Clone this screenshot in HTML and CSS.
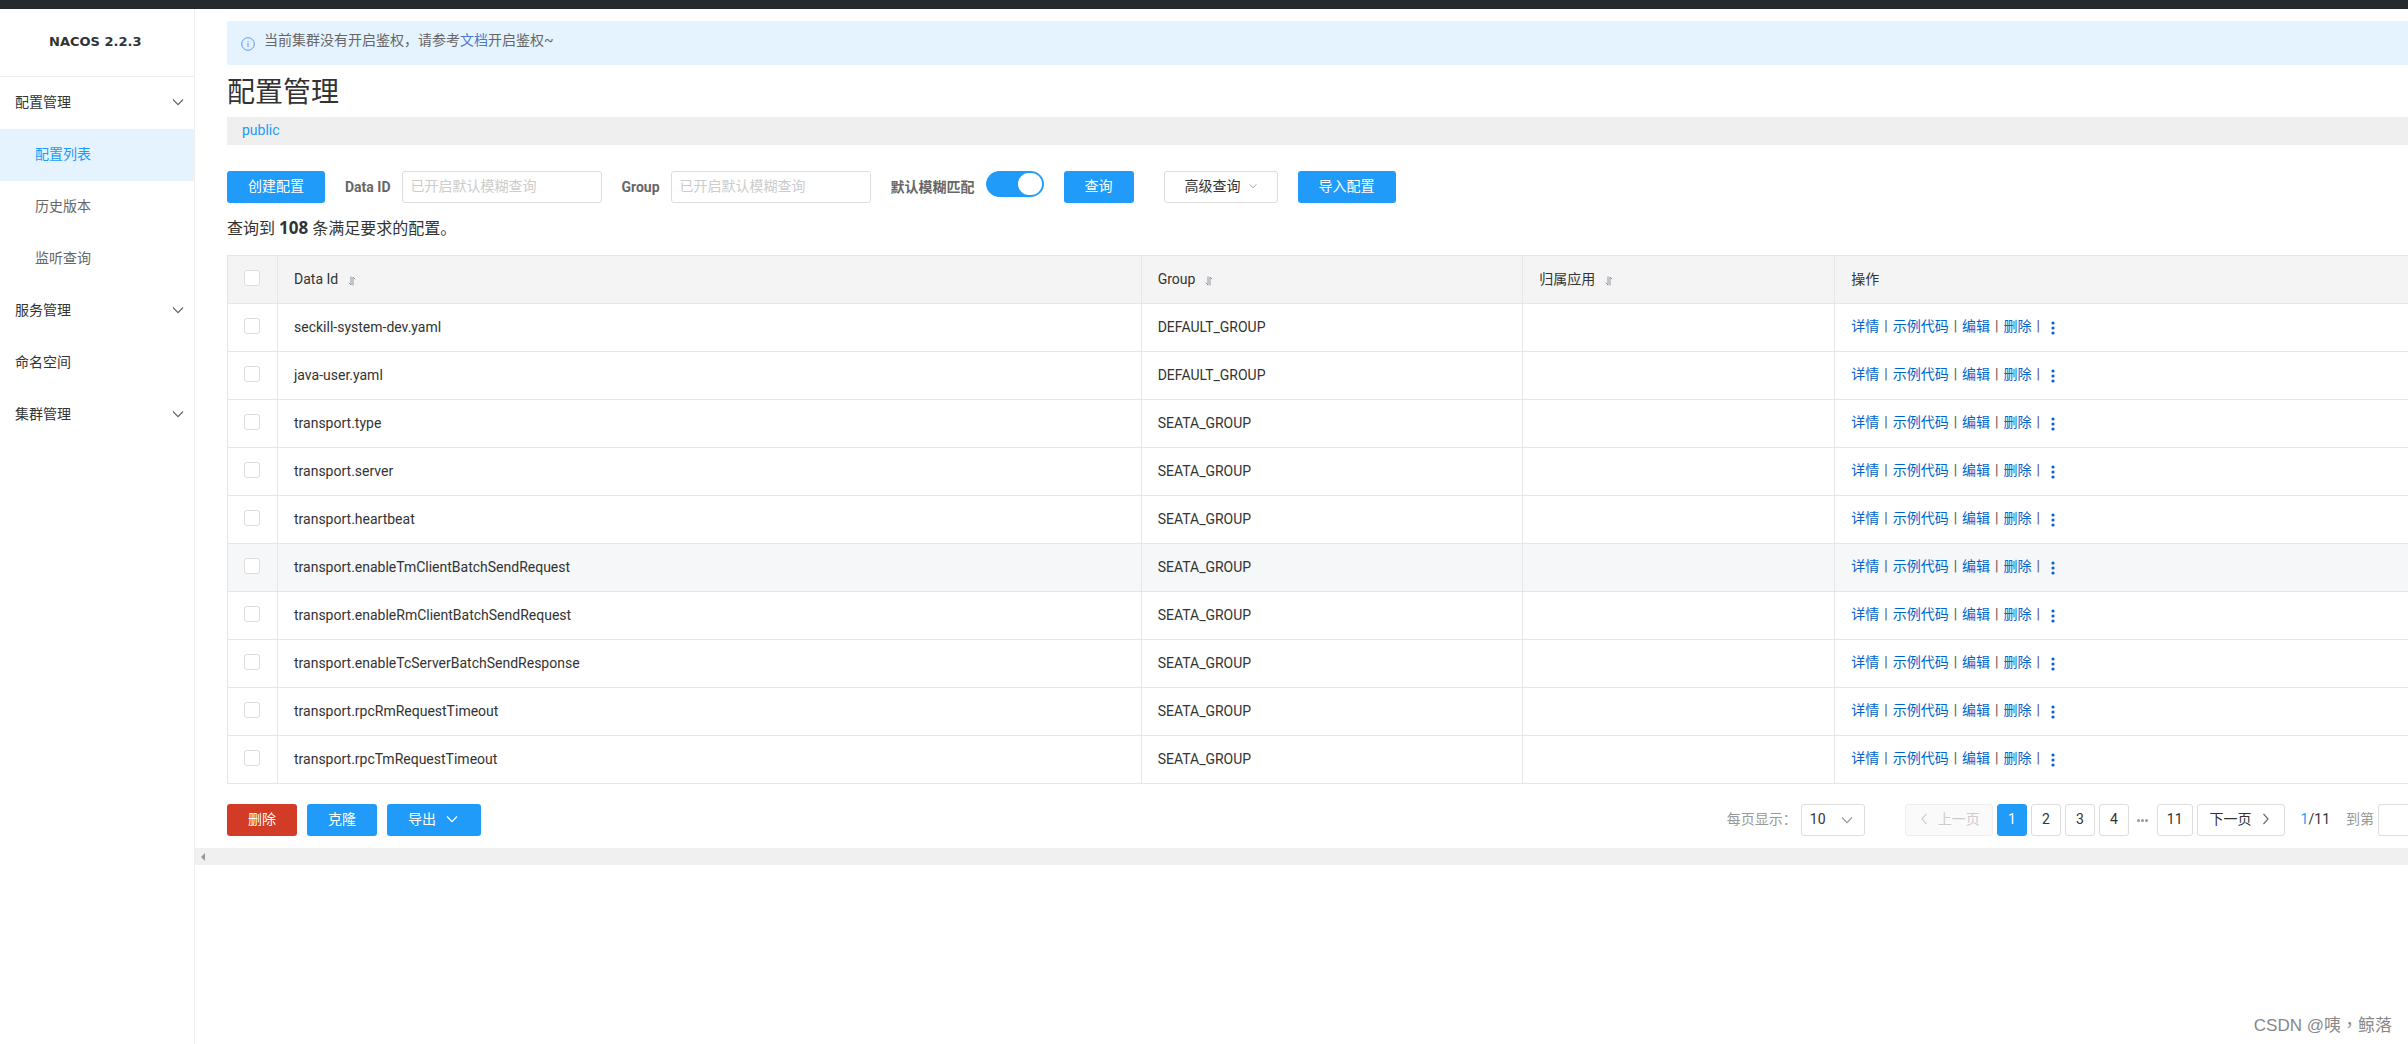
FILE: index.html
```html
<!DOCTYPE html>
<html lang="zh-CN">
<head>
<meta charset="utf-8">
<title>Nacos</title>
<link rel="stylesheet" href="styles.css">
</head>
<body>
<svg class="defs" aria-hidden="true">
  <symbol id="down" viewBox="0 0 12 12"><path d="M1 3.5 6 8.7 11 3.5" fill="none" stroke="currentColor" stroke-width="1.2"/></symbol>
  <symbol id="left" viewBox="0 0 12 12"><path d="M8.5 .8 4 6l4.500 5.200" fill="none" stroke="currentColor" stroke-width="1.2"/></symbol>
  <symbol id="right" viewBox="0 0 12 12"><path d="M3.500 .8 8 6l-4.500 5.200" fill="none" stroke="currentColor" stroke-width="1.2"/></symbol>
  <symbol id="sort" viewBox="0 0 10 10"><path d="M4 .5V9L1.800 6.800M6 9.500V1L8.200 3.200" fill="none" stroke="currentColor" stroke-width=".9"/></symbol>
  <symbol id="more" viewBox="0 0 4 14"><circle cx="2" cy="2" r="1.600"/><circle cx="2" cy="7" r="1.600"/><circle cx="2" cy="12" r="1.600"/></symbol>
</svg>
<header class="topbar"></header>
<div class="layout">
  <aside class="sidebar">
    <h1 class="brand">NACOS 2.2.3</h1>
    <nav class="menu">
      <a class="item" href="#">配置管理<svg class="icon"><use href="#down"/></svg></a>
      <a class="item sub active" href="#">配置列表</a>
      <a class="item sub" href="#">历史版本</a>
      <a class="item sub" href="#">监听查询</a>
      <a class="item" href="#">服务管理<svg class="icon"><use href="#down"/></svg></a>
      <a class="item" href="#">命名空间</a>
      <a class="item" href="#">集群管理<svg class="icon"><use href="#down"/></svg></a>
    </nav>
  </aside>
  <main class="main">
    <div class="content">
      <div class="notice">
        <svg class="info" viewBox="0 0 14 14"><circle cx="7" cy="7" r="6.300" fill="none" stroke="currentColor"/><path d="M7 6v4M7 4v1" stroke="currentColor"/></svg>
        <p>当前集群没有开启鉴权，请参考<a href="#">文档</a>开启鉴权~</p>
      </div>
      <h2 class="title">配置管理</h2>
      <div class="namespace"><a href="#">public</a></div>
      <form class="filters">
        <button class="btn primary" type="button">创建配置</button>
        <div class="field"><label for="dataId">Data ID</label><input id="dataId" class="text" type="text" placeholder="已开启默认模糊查询"></div>
        <div class="field"><label for="group">Group</label><input id="group" class="text" type="text" placeholder="已开启默认模糊查询"></div>
        <div class="field"><label for="fuzzy">默认模糊匹配</label><input id="fuzzy" class="switch" type="checkbox" role="switch" checked></div>
        <button class="btn primary" type="button">查询</button>
        <button class="btn advanced" type="button">高级查询<svg class="icon small"><use href="#down"/></svg></button>
        <button class="btn primary" type="button">导入配置</button>
      </form>
      <p class="summary">查询到 <strong>108</strong> 条满足要求的配置。</p>
      <table class="grid">
        <colgroup><col class="c-check"><col class="c-id"><col class="c-group"><col class="c-app"><col></colgroup>
        <thead>
          <tr><th class="check"><input type="checkbox" aria-label="全选"></th><th>Data Id<svg class="sort"><use href="#sort"/></svg></th><th>Group<svg class="sort"><use href="#sort"/></svg></th><th>归属应用<svg class="sort"><use href="#sort"/></svg></th><th>操作</th></tr>
        </thead>
        <tbody>
          <tr><td class="check"><input type="checkbox" aria-label="选择"></td><td>seckill-system-dev.yaml</td><td>DEFAULT_GROUP</td><td></td><td class="ops"><a href="#">详情</a><i>|</i><a href="#">示例代码</a><i>|</i><a href="#">编辑</a><i>|</i><a href="#">删除</a><i>|</i><a href="#" aria-label="更多"><svg class="more"><use href="#more"/></svg></a></td></tr>
          <tr><td class="check"><input type="checkbox" aria-label="选择"></td><td>java-user.yaml</td><td>DEFAULT_GROUP</td><td></td><td class="ops"><a href="#">详情</a><i>|</i><a href="#">示例代码</a><i>|</i><a href="#">编辑</a><i>|</i><a href="#">删除</a><i>|</i><a href="#" aria-label="更多"><svg class="more"><use href="#more"/></svg></a></td></tr>
          <tr><td class="check"><input type="checkbox" aria-label="选择"></td><td>transport.type</td><td>SEATA_GROUP</td><td></td><td class="ops"><a href="#">详情</a><i>|</i><a href="#">示例代码</a><i>|</i><a href="#">编辑</a><i>|</i><a href="#">删除</a><i>|</i><a href="#" aria-label="更多"><svg class="more"><use href="#more"/></svg></a></td></tr>
          <tr><td class="check"><input type="checkbox" aria-label="选择"></td><td>transport.server</td><td>SEATA_GROUP</td><td></td><td class="ops"><a href="#">详情</a><i>|</i><a href="#">示例代码</a><i>|</i><a href="#">编辑</a><i>|</i><a href="#">删除</a><i>|</i><a href="#" aria-label="更多"><svg class="more"><use href="#more"/></svg></a></td></tr>
          <tr><td class="check"><input type="checkbox" aria-label="选择"></td><td>transport.heartbeat</td><td>SEATA_GROUP</td><td></td><td class="ops"><a href="#">详情</a><i>|</i><a href="#">示例代码</a><i>|</i><a href="#">编辑</a><i>|</i><a href="#">删除</a><i>|</i><a href="#" aria-label="更多"><svg class="more"><use href="#more"/></svg></a></td></tr>
          <tr class="hover"><td class="check"><input type="checkbox" aria-label="选择"></td><td>transport.enableTmClientBatchSendRequest</td><td>SEATA_GROUP</td><td></td><td class="ops"><a href="#">详情</a><i>|</i><a href="#">示例代码</a><i>|</i><a href="#">编辑</a><i>|</i><a href="#">删除</a><i>|</i><a href="#" aria-label="更多"><svg class="more"><use href="#more"/></svg></a></td></tr>
          <tr><td class="check"><input type="checkbox" aria-label="选择"></td><td>transport.enableRmClientBatchSendRequest</td><td>SEATA_GROUP</td><td></td><td class="ops"><a href="#">详情</a><i>|</i><a href="#">示例代码</a><i>|</i><a href="#">编辑</a><i>|</i><a href="#">删除</a><i>|</i><a href="#" aria-label="更多"><svg class="more"><use href="#more"/></svg></a></td></tr>
          <tr><td class="check"><input type="checkbox" aria-label="选择"></td><td>transport.enableTcServerBatchSendResponse</td><td>SEATA_GROUP</td><td></td><td class="ops"><a href="#">详情</a><i>|</i><a href="#">示例代码</a><i>|</i><a href="#">编辑</a><i>|</i><a href="#">删除</a><i>|</i><a href="#" aria-label="更多"><svg class="more"><use href="#more"/></svg></a></td></tr>
          <tr><td class="check"><input type="checkbox" aria-label="选择"></td><td>transport.rpcRmRequestTimeout</td><td>SEATA_GROUP</td><td></td><td class="ops"><a href="#">详情</a><i>|</i><a href="#">示例代码</a><i>|</i><a href="#">编辑</a><i>|</i><a href="#">删除</a><i>|</i><a href="#" aria-label="更多"><svg class="more"><use href="#more"/></svg></a></td></tr>
          <tr><td class="check"><input type="checkbox" aria-label="选择"></td><td>transport.rpcTmRequestTimeout</td><td>SEATA_GROUP</td><td></td><td class="ops"><a href="#">详情</a><i>|</i><a href="#">示例代码</a><i>|</i><a href="#">编辑</a><i>|</i><a href="#">删除</a><i>|</i><a href="#" aria-label="更多"><svg class="more"><use href="#more"/></svg></a></td></tr>
        </tbody>
      </table>
      <div class="footer">
        <div class="batch">
          <button class="btn danger" type="button">删除</button>
          <button class="btn primary" type="button">克隆</button>
          <button class="btn primary export" type="button">导出<svg class="icon"><use href="#down"/></svg></button>
        </div>
        <div class="pagination">
          <label class="muted" for="size">每页显示：</label>
          <span class="select"><select id="size"><option>10</option></select><svg class="icon"><use href="#down"/></svg></span>
          <button class="page step" type="button" disabled><svg class="icon"><use href="#left"/></svg>上一页</button>
          <button class="page current" type="button">1</button>
          <button class="page" type="button">2</button>
          <button class="page" type="button">3</button>
          <button class="page" type="button">4</button>
          <span class="dots"><b></b><b></b><b></b></span>
          <button class="page" type="button">11</button>
          <button class="page step" type="button">下一页<svg class="icon"><use href="#right"/></svg></button>
          <span class="count"><em>1</em>/11</span>
          <label class="muted" for="jump">到第</label>
          <input id="jump" class="jump" type="text">
        </div>
      </div>
    </div>
    <div class="scrollbar"><svg viewBox="0 0 4 8"><path d="M4 0v8L0 4z"/></svg></div>
  </main>
</div>
<div class="watermark" lang="zh-TW">CSDN @咦，鲸落</div>
</body>
</html>
```
FILE: styles.css
```css
* { box-sizing: border-box; }

body {
  margin: 0;
  min-height: 100vh;
  display: flex;
  flex-direction: column;
  overflow: hidden;
  background: #fff;
  color: #333;
  font: 14px/20px Roboto, "Noto Sans CJK SC", sans-serif;
}

h1, h2, p { margin: 0; }
a { color: inherit; text-decoration: none; }
button, input, select { font: inherit; color: inherit; margin: 0; }
.defs { display: none; }
.icon { width: 12px; height: 12px; flex: none; }

.topbar { height: 9px; background: #252a2f; }
.layout { flex: 1; display: flex; }

.sidebar { width: 195px; flex: none; border-right: 1px solid #eee; }
.brand {
  height: 68px;
  padding: 23px 0 0 49px;
  border-bottom: 1px solid #eee;
  font: bold 13px/20px "DejaVu Sans", sans-serif;
}
.item {
  display: flex;
  align-items: center;
  justify-content: space-between;
  height: 52px;
  padding: 0 10px 2px 15px;
}
.item .icon { color: #666; }
.sub { padding-left: 35px; color: #666; }
.active { background: #e4f3fe; color: #209bfa; }

.main { flex: 1; min-width: 0; overflow: hidden; }
.content { padding: 12px 0 12px 32px; }

.notice {
  display: flex;
  gap: 9px;
  height: 44px;
  padding: 9px 14px;
  background: #e4f3fe;
  border-radius: 3px 0 0 3px;
  color: #666;
}
.notice a { color: #4a7bcb; }
.info { width: 14px; height: 14px; margin-top: 7px; color: #5b96fa; }

.title { padding: 8px 0 4px; font-size: 28px; font-weight: 400; line-height: 40px; }
.namespace { height: 28px; padding: 3px 15px; background: #efefef; color: #209bfa; }

.filters { display: flex; align-items: center; gap: 20px; margin-top: 26px; }
.field { display: flex; align-items: center; gap: 11px; }
.field label { color: #666; font-weight: 700; }
.btn {
  display: flex;
  align-items: center;
  height: 32px;
  padding: 0 20px 2px;
  border: 1px solid transparent;
  border-radius: 3px;
  gap: 8px;
}
.primary { background: #209bfa; color: #fff; }
.danger { background: #d23c26; color: #fff; }
.advanced { margin-left: 10px; background: #fff; border-color: #ddd; }
.export { gap: 10px; padding-right: 22px; }
.small { width: 8px; height: 8px; color: #888; }
.text {
  width: 200px;
  height: 32px;
  padding: 0 8px 2px;
  border: 1px solid #ddd;
  border-radius: 3px;
  background: #fff;
}
.text::placeholder { color: #ccc; opacity: 1; }
.switch {
  appearance: none;
  display: flex;
  justify-content: flex-end;
  width: 58px;
  height: 26px;
  margin-bottom: 6px;
  padding: 1px;
  border: 1px solid #209bfa;
  border-radius: 13px;
  background: #209bfa;
}
.switch::before { content: ""; width: 24px; height: 22px; border-radius: 12px; background: #fff; }

.summary { margin: 14px 0; font-size: 16px; line-height: 24px; }
.summary strong { font-family: "Noto Sans", sans-serif; font-size: 17px; line-height: 1; }

.grid { width: 100%; table-layout: fixed; border-spacing: 0; border-top: 1px solid #e6e6e6; }
.c-check { width: 50px; }
.c-id { width: 39.6%; }
.c-group { width: 17.5%; }
.c-app { width: 14.3%; }
.grid th, .grid td {
  height: 48px;
  padding: 0 16px 1px;
  border-left: 1px solid #e6e6e6;
  border-bottom: 1px solid #e6e6e6;
  text-align: left;
  font-weight: 400;
}
.grid th { background: #f4f4f4; }
.grid .hover td { background: #f5f7f9; }
.grid .check { padding-bottom: 4px; }
.check input {
  appearance: none;
  display: block;
  width: 16px;
  height: 16px;
  border: 1px solid #ddd;
  border-radius: 3px;
  background: #fff;
}
.sort { width: 10px; height: 10px; margin-left: 9px; vertical-align: -2px; color: #889; }
.grid .ops { padding-bottom: 3px; }
.ops a { color: #06c; }
.ops i { margin: 0 5px; font-style: normal; color: #555; }
.more { width: 4px; height: 14px; margin-left: 6px; vertical-align: -4px; fill: #06c; }

.footer { display: flex; justify-content: space-between; margin-top: 20px; }
.batch { display: flex; gap: 10px; }
.pagination { display: flex; align-items: center; gap: 4px; margin-right: -20px; }
.muted { padding-bottom: 2px; color: #999; }
.select { display: grid; align-items: center; width: 64px; margin-right: 36px; }
.select > * { grid-area: 1 / 1; }
.select select {
  appearance: none;
  width: 100%;
  height: 32px;
  padding: 0 8px 2px;
  border: 1px solid #ddd;
  border-radius: 3px;
  background: #fff;
}
.select .icon { justify-self: end; margin-right: 12px; color: #999; pointer-events: none; }
.page {
  display: flex;
  align-items: center;
  justify-content: center;
  gap: 8px;
  min-width: 30px;
  height: 32px;
  padding: 0 9px 2px;
  border: 1px solid #ddd;
  border-radius: 3px;
  background: #fff;
}
.step { width: 88px; }
.step .icon { color: #666; }
.page:disabled { background: #fafafa; border-color: #eee; color: #ccc; }
.page:disabled .icon { color: #ccc; }
.current { background: #209bfa; border-color: #209bfa; color: #fff; }
.dots { display: flex; justify-content: center; gap: 1px; width: 20px; }
.dots b { width: 3px; height: 3px; border-radius: 2px; background: #999; }
.count { margin: 0 12px; padding-bottom: 2px; }
.count em { font-style: normal; color: #209bfa; }
.jump { width: 50px; height: 32px; border: 1px solid #ddd; border-radius: 3px; }

.scrollbar { display: flex; align-items: center; height: 17px; padding-left: 6px; background: #f0f0f0; }
.scrollbar svg { width: 4px; height: 8px; fill: #999; }

.watermark {
  position: absolute;
  right: 16px;
  bottom: 6px;
  color: #888;
  font: 17px/24px "Liberation Sans", "Noto Sans CJK TC", sans-serif;
}
```
